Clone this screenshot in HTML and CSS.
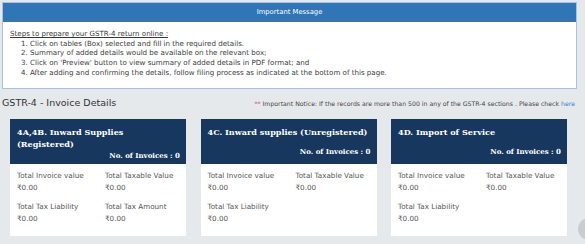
FILE: index.html
```html
<!DOCTYPE html>
<html lang="en">
<head>
    <meta charset="UTF-8">
    <title>GSTR-4 - Invoice Details</title>
    <link rel="stylesheet" href="styles.css">
</head>
<body>
    <div class="page">
        <div class="message">
            <div class="message-head">Important Message</div>
            <div class="message-body">
                <p class="steps-title">Steps to prepare your GSTR-4 return online :</p>
                <ol class="steps">
                    <li>Click on tables (Box) selected and fill in the required details.</li>
                    <li>Summary of added details would be available on the relevant box;</li>
                    <li>Click on 'Preview' button to view summary of added details in PDF format; and</li>
                    <li>After adding and confirming the details, follow filing process as indicated at the bottom of this page.</li>
                </ol>
            </div>
        </div>

        <div class="section-head">
            <h2>GSTR-4 - Invoice Details</h2>
            <p class="notice"><span class="stars">**</span> Important Notice: If the records are more than 500 in any of the GSTR-4 sections . Please check <a href="#">here</a></p>
        </div>

        <div class="cards">
            <div class="card">
                <div class="card-head">
                    <div class="card-title">4A,4B. Inward Supplies (Registered)</div>
                    <div class="card-count">No. of Invoices : 0</div>
                </div>
                <div class="card-body">
                    <div class="field"><span>Total Invoice value</span><b>₹0.00</b></div>
                    <div class="field"><span>Total Taxable Value</span><b>₹0.00</b></div>
                    <div class="field"><span>Total Tax Liability</span><b>₹0.00</b></div>
                    <div class="field"><span>Total Tax Amount</span><b>₹0.00</b></div>
                </div>
            </div>

            <div class="card">
                <div class="card-head">
                    <div class="card-title">4C. Inward supplies (Unregistered)</div>
                    <div class="card-count">No. of Invoices : 0</div>
                </div>
                <div class="card-body">
                    <div class="field"><span>Total Invoice value</span><b>₹0.00</b></div>
                    <div class="field"><span>Total Taxable Value</span><b>₹0.00</b></div>
                    <div class="field"><span>Total Tax Liability</span><b>₹0.00</b></div>
                </div>
            </div>

            <div class="card">
                <div class="card-head">
                    <div class="card-title">4D. Import of Service</div>
                    <div class="card-count">No. of Invoices : 0</div>
                </div>
                <div class="card-body">
                    <div class="field"><span>Total Invoice value</span><b>₹0.00</b></div>
                    <div class="field"><span>Total Taxable Value</span><b>₹0.00</b></div>
                    <div class="field"><span>Total Tax Liability</span><b>₹0.00</b></div>
                </div>
            </div>
        </div>
    </div>
    <div class="help-bubble"></div>
</body>
</html>
```

FILE: styles.css
```css
body {
    font-family: "DejaVu Sans", Verdana, sans-serif;
    background-color: #e6e9ec;
    margin: 0;
    padding: 0;
    overflow: hidden;
}

.page {
    width: 575px;
    padding: 2px 0 0 2px;
}

.message {
    border: 1px solid #a8c3df;
    background-color: #ffffff;
}

.message-head {
    background-color: #3075b6;
    color: #ffffff;
    text-align: center;
    font-size: 6.8px;
    height: 19px;
    line-height: 19px;
}

.message-body {
    padding: 7px 7px 10px;
    font-size: 7.1px;
    color: #3a3a3a;
    line-height: 9.7px;
}

.steps-title {
    margin: 0;
    text-decoration: underline;
}

.steps {
    margin: 0;
    padding-left: 20px;
}

.section-head {
    display: flex;
    justify-content: space-between;
    align-items: baseline;
    padding: 8px 2px 0 0;
    line-height: 12px;
}

.section-head h2 {
    margin: 0;
    font-size: 9.5px;
    font-weight: normal;
    color: #333;
}

.notice {
    margin: 0;
    font-size: 6.2px;
    color: #444;
}

.notice .stars {
    color: #e03030;
}

.notice a {
    color: #3a7fd0;
    text-decoration: none;
}

.cards {
    display: grid;
    grid-template-columns: repeat(3, 176px);
    column-gap: 14.5px;
    padding: 9px 0 0 8px;
}

.card {
    background-color: #ffffff;
    height: 117px;
}

.card-head {
    background-color: #17375f;
    color: #ffffff;
    height: 45px;
    padding: 7px 6px 6px 7px;
    box-sizing: border-box;
    display: flex;
    flex-direction: column;
}

.card-title {
    font-family: "DejaVu Serif", Georgia, serif;
    font-weight: bold;
    font-size: 8.1px;
    line-height: 12px;
    flex: 1;
}

.card-count {
    font-family: "DejaVu Serif", Georgia, serif;
    font-weight: bold;
    font-size: 7px;
    text-align: right;
    line-height: 12px;
}

.card-body {
    display: grid;
    grid-template-columns: 88px 1fr;
    row-gap: 7px;
    padding: 6px 7px 0;
}

.field span,
.field b {
    display: block;
    font-size: 7.2px;
    color: #555;
    line-height: 12px;
    font-weight: normal;
}

.help-bubble {
    position: absolute;
    left: 578px;
    top: 218px;
    width: 22px;
    height: 22px;
    border-radius: 50%;
    background-color: #c9ccd0;
}
```
